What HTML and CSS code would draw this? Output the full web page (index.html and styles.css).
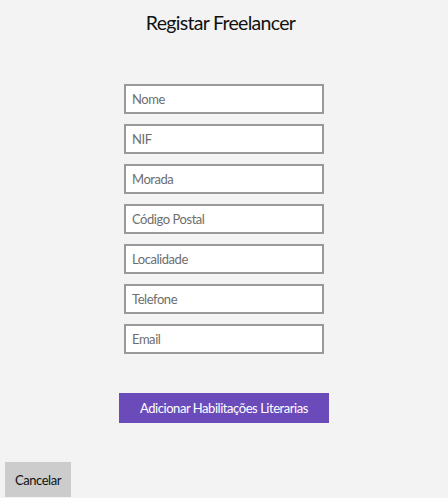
FILE: index.html
```html
<!DOCTYPE html>
<html lang="pt">
<head>
<meta charset="utf-8">
<title>Registar Freelancer</title>
<link rel="stylesheet" href="styles.css">
</head>
<body>
<div class="page">
  <h1 class="title">Registar Freelancer</h1>
  <form class="form">
    <input class="field" type="text" placeholder="Nome">
    <input class="field" type="text" placeholder="NIF">
    <input class="field" type="text" placeholder="Morada">
    <input class="field" type="text" placeholder="Código Postal">
    <input class="field" type="text" placeholder="Localidade">
    <input class="field" type="text" placeholder="Telefone">
    <input class="field" type="text" placeholder="Email">
    <button class="primary" type="button">Adicionar Habilitações Literarias</button>
  </form>
  <div class="footer">
    <button class="cancel" type="button">Cancelar</button>
  </div>
</div>
</body>
</html>
```
FILE: styles.css
```css
html, body {
  margin: 0;
  padding: 0;
  background: #f3f3f3;
  font-family: "Lato", "Noto Sans", sans-serif;
}
.page {
  height: 498px;
  display: flex;
  flex-direction: column;
}
.title {
  margin: 0;
  padding-top: 9px;
  font-size: 19.5px;
  line-height: 28px;
  font-weight: 400;
  letter-spacing: -0.7px;
  color: #111;
  text-align: center;
  padding-right: 7px;
}
.form {
  margin-top: 47px;
  display: flex;
  flex-direction: column;
  align-items: center;
  gap: 10px;
}
.field {
  box-sizing: border-box;
  width: 200px;
  height: 30px;
  margin: 0;
  border: 2px solid #999999;
  background: #ffffff;
  padding: 0 6px;
  font-family: inherit;
  font-size: 13px;
  letter-spacing: -0.45px;
  color: #222;
  outline: none;
}
.field::placeholder {
  color: #6e6e6e;
}
.primary {
  margin-top: 29px;
  width: 210px;
  height: 30px;
  border: none;
  background: #6b4bba;
  color: #ffffff;
  font-family: inherit;
  font-size: 13px;
  letter-spacing: -0.45px;
  padding: 0;
}
.footer {
  margin-top: auto;
  padding: 0 0 1px 5px;
}
.cancel {
  width: 66px;
  height: 35px;
  border: none;
  background: #cccccc;
  color: #111;
  font-family: inherit;
  font-size: 13px;
  letter-spacing: -0.45px;
  padding: 0;
  display: block;
}
```
